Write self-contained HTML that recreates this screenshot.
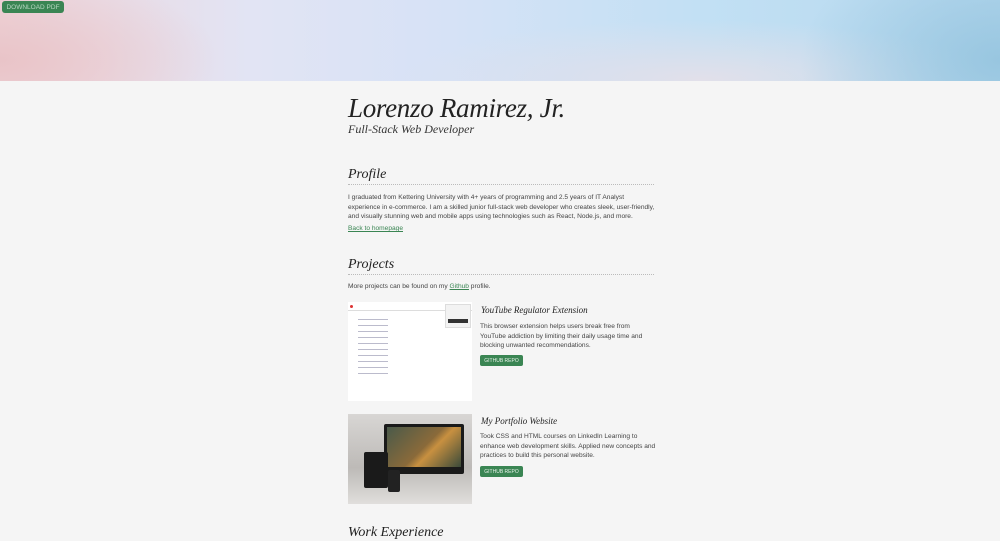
<!DOCTYPE html>
<html><head><style>
body{margin:0;width:1000px;height:534px;overflow:hidden;background:#f5f5f5;font-family:"Liberation Sans",sans-serif;color:#333}
.hdr{position:absolute;left:0;top:0;width:1000px;height:81px;background:
radial-gradient(ellipse 220px 90px at 0 60px,#e9c4c8,transparent),
radial-gradient(ellipse 200px 120px at 1000px 60px,#98c6e0,transparent),
radial-gradient(ellipse 300px 60px at 700px 80px,#e2e0ea,transparent),
linear-gradient(90deg,#efd6db 0%,#e2e4f4 25%,#d6e2f6 45%,#c2e0f4 70%,#b6d8ee 100%)}
.dl{position:absolute;left:2px;top:1px;background:#3a8553;color:#b9d7c2;font-size:6.5px;padding:0;border-radius:3px;height:12px;width:62px;white-space:nowrap;overflow:hidden;display:flex;align-items:center;justify-content:center}
.c{position:absolute;left:348px;width:306px}
.cur{font-family:"Liberation Serif",serif;font-style:italic;color:#222;white-space:nowrap}
h2{margin:0;font-weight:normal;font-size:14px;border-bottom:1px dotted #bbb;padding-bottom:1px}
p{margin:0;font-size:6.6px;line-height:9.5px;color:#444;white-space:nowrap}
a{color:#3a8553}
.btn{background:#3a8553;color:#e8f2ea;font-size:5px;height:11px;border-radius:2px;width:43px;white-space:nowrap;display:flex;align-items:center;justify-content:center;overflow:hidden}
</style></head><body>
<div class="hdr"></div>
<div class="dl">DOWNLOAD PDF</div>
<div class="c cur" style="top:93px;font-size:27px;line-height:30px;letter-spacing:-.3px">Lorenzo Ramirez, Jr.</div>
<div class="c cur" style="top:122px;font-size:12px;color:#333">Full-Stack Web Developer</div>
<div class="c" style="top:167px"><h2 class="cur">Profile</h2></div>
<div class="c" style="top:193px"><p>I graduated from Kettering University with 4+ years of programming and 2.5 years of IT Analyst<br>experience in e-commerce. I am a skilled junior full-stack web developer who creates sleek, user-friendly,<br>and visually stunning web and mobile apps using technologies such as React, Node.js, and more.</p></div>
<div class="c" style="top:224px"><p><a href="#">Back to homepage</a></p></div>
<div class="c" style="top:257px"><h2 class="cur">Projects</h2></div>
<div class="c" style="top:282px"><p>More projects can be found on my <a href="#">Github</a> profile.</p></div>
<div style="position:absolute;left:348px;top:302px;width:124px;height:99px;background:#fff;border:0">
<div style="position:absolute;left:2px;top:3px;width:3px;height:3px;background:#d33;border-radius:50%"></div>
<div style="position:absolute;left:0;top:8px;width:124px;border-top:1px solid #ddd"></div>
<div style="position:absolute;left:10px;top:14px;width:30px;height:60px;background:repeating-linear-gradient(#fff 0 3px,#bbc 3px 4px,#fff 4px 6px)"></div>
<div style="position:absolute;left:97px;top:2px;width:24px;height:22px;background:#f3f3f3;border:1px solid #ddd"><div style="margin:14px 2px 0;height:4px;background:#333"></div></div>
</div>
<div style="position:absolute;left:348px;top:414px;width:124px;height:90px;background:linear-gradient(#d8d6d4,#bdbab7 60%,#e0dedc)">
<div style="position:absolute;left:36px;top:10px;width:80px;height:50px;background:#1a1a1a;border-radius:2px"><div style="margin:3px;height:40px;background:linear-gradient(135deg,#4a5a4a,#8a6a3a 50%,#c89040 60%,#3a4a3a)"></div></div>
<div style="position:absolute;left:16px;top:38px;width:24px;height:36px;background:#1a1a1a;border-radius:2px"></div>
<div style="position:absolute;left:40px;top:56px;width:12px;height:22px;background:#222;border-radius:2px"></div>
</div>
<div class="cur" style="position:absolute;left:481px;top:305px;font-size:9px">YouTube Regulator Extension</div>
<div style="position:absolute;left:480px;top:322px;width:175px"><p>This browser extension helps users break free from<br>YouTube addiction by limiting their daily usage time and<br>blocking unwanted recommendations.</p></div>
<div class="btn" style="position:absolute;left:480px;top:355px">GITHUB REPO</div>
<div class="cur" style="position:absolute;left:481px;top:416px;font-size:9px">My Portfolio Website</div>
<div style="position:absolute;left:480px;top:432px;width:178px"><p>Took CSS and HTML courses on LinkedIn Learning to<br>enhance web development skills. Applied new concepts and<br>practices to build this personal website.</p></div>
<div class="btn" style="position:absolute;left:480px;top:466px">GITHUB REPO</div>
<div class="c cur" style="top:525px;font-size:14px">Work Experience</div>
</body></html>
